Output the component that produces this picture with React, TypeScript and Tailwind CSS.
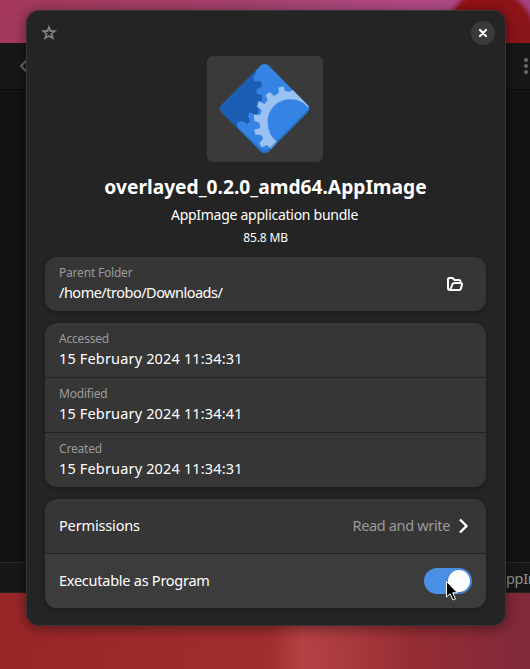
import type { ReactNode } from "react";

function AppImageIcon() {
  return (
    <svg viewBox="21 18 348 318" className="h-[106px] w-[116px]">
      <defs>
        <clipPath id="diamond">
          <path d="M183 46Q194 38 205 46L323 165Q331 176 323 187L205 305Q194 313 183 305L65 187Q56 176 65 165Z" />
        </clipPath>
      </defs>
      <g clipPath="url(#diamond)">
        <rect x="50" y="30" width="290" height="290" fill="#3584e4" />
        <path
          d="M40 20H168V69L159 81L164 94L182 93L187 108L169 119L171 133L187 136L185 153L171 155L176 174L174 194L161 193L149 187L144 199L151 213L141 223L128 213L112 217V240H40Z"
          fill="#1a5fb4"
        />
        <path
          d="M340 176V130L281 118L270 125L255 123L250 109L235 113L237 128L222 138L209 126L197 135L203 150L194 162L177 154L171 170L185 180L181 194H161L163 212L178 218L181 234L163 239L166 254L183 254L190 265L178 280L185 292L202 285L214 300L232 276Q203 255 203 216C203 178 233 148 271 148Q306 148 328 176Z"
          fill="#99c1f1"
        />
        <path
          d="M57 176L183 297Q194 304 205 297L331 171V190L205 315H183L57 194Z"
          fill="#1a5fb4"
          opacity=".5"
        />
      </g>
    </svg>
  );
}

function Group({ children, className = "" }: { children: ReactNode; className?: string }) {
  return (
    <div
      className={`w-[441px] divide-y divide-[#222] overflow-hidden rounded-xl bg-[#363636] shadow-[0_1px_4px_rgba(0,0,0,0.3)] ${className}`}
    >
      {children}
    </div>
  );
}

function Property({
  label,
  value,
  valueClass = "tracking-[0.16px]",
  children,
}: {
  label: string;
  value: string;
  valueClass?: string;
  children?: ReactNode;
}) {
  return (
    <div className="box-content flex h-[54px] items-center justify-between pr-[22px] pl-[14px]">
      <div>
        <div className="h-[18px] text-[12px] leading-[18px] tracking-[-0.2px] text-[#9b9b9b]">{label}</div>
        <div className={`h-[22px] text-[14.5px] leading-[20px] text-white ${valueClass}`}>{value}</div>
      </div>
      {children}
    </div>
  );
}

export default function App() {
  return (
    <div
      className="relative h-[669px] w-[530px] overflow-hidden bg-[linear-gradient(90deg,#982629_0%,#a02e30_51%,#b54145_57%,#a93a3e_66%,#962d34_78%,#80293a_100%)] text-white"
      style={{ fontFamily: '"Noto Sans", sans-serif' }}
    >
      <div className="relative h-[43px] overflow-hidden bg-[linear-gradient(90deg,#a4385a,#a6436f_48%,#b34c87_80%,#a34482)]">
        <div className="absolute -top-[11px] left-[440px] h-[130px] w-[100px] rounded-[50%] bg-[linear-gradient(120deg,#981010,#821923)] blur-[2px]" />
      </div>
      <div className="flex h-[550px] flex-col border-b border-[#242424] bg-[#131313] text-[#686868]">
        <div className="flex h-[47px] items-center justify-between border-b border-[#0a0a0a] bg-[#171717] pl-[18px]">
          <svg width="12" height="14" viewBox="0 0 12 14" fill="none" stroke="currentColor" strokeWidth="2">
            <path d="M9 1 3 7l6 6" />
          </svg>
          <svg width="7" height="18" viewBox="0 0 7 18" fill="currentColor">
            <circle cx="3" cy="3" r="2" />
            <circle cx="3" cy="9" r="2" />
            <circle cx="3" cy="15" r="2" />
          </svg>
        </div>
        <div className="flex-1" />
        <div className="h-[30px] border-t border-[#2b2b2b] bg-[#171717] pl-[506px] text-[14.5px] leading-[30px] tracking-[-0.3px] whitespace-nowrap text-[#919191]">
          ppIm
        </div>
      </div>

      <main className="absolute top-[10px] left-[26px] flex h-[616px] w-[480px] flex-col items-center rounded-[13px] border border-[#353535] bg-[#242424] pr-px shadow-[0_2px_12px_2px_rgba(0,0,0,0.35)]">
        <header className="flex h-[45px] w-full items-center justify-between pr-[9px] pb-[2px] pl-[13px]">
          <svg width="18" height="18" viewBox="0 0 18 18">
            <path
              d="M9 .8l2.1 5.3 6 .1-4.7 3.8 1.9 6L9 12.9 3.7 16l1.9-6L.9 6.2l6-.1zM9 5.4L8.2 8H5.3l2.3 1.7-.9 2.8L9 10.9l2.3 1.6-.9-2.8L12.700 8H9.8z"
              fill="#808080"
              fillRule="evenodd"
            />
          </svg>
          <button aria-label="Close" className="flex size-6 items-center justify-center rounded-full bg-[#3a3a3a]">
            <svg width="10" height="10" viewBox="0 0 10 10" stroke="white" strokeWidth="2.2" strokeLinecap="round">
              <path d="M2 2l6 6M8 2 2 8" />
            </svg>
          </button>
        </header>
        <div className="mr-px h-[106px] w-[116px] rounded-md bg-[#3a3a3a]">
          <AppImageIcon />
        </div>
        <h1 className="mt-[11px] h-[28px] text-[19.2px] leading-[28px] font-bold whitespace-nowrap">
          overlayed_0.2.0_amd64.AppImage
        </h1>
        <p className="mt-[3px] mr-[2px] h-[22px] text-[14px] leading-[22px] tracking-[-0.27px]">
          AppImage application bundle
        </p>
        <p className="mt-[2px] h-[20px] text-[12px] leading-[20px] tracking-[-0.15px]">85.8 MB</p>
        <Group className="mt-[9px]">
          <Property label="Parent Folder" value="/home/trobo/Downloads/" valueClass="tracking-[-0.5px]">
            <svg
              width="18"
              height="16"
              viewBox="0 0 18 16"
              fill="none"
              stroke="white"
              strokeWidth="2"
              strokeLinejoin="round"
              strokeLinecap="round"
            >
              <path d="M4 14h9.2c.8 0 1.3-.4 1.6-1.1l1.1-4c.3-1-.2-1.9-1.2-1.9H8.2c-.8 0-1.4.4-1.7 1.1L4.6 13M4 14c-1.2 0-2-.8-2-2V3.5C2 2.6 2.6 2 3.5 2h3l2 2H13c.8 0 1.3.5 1.5 1.2V7" />
            </svg>
          </Property>
        </Group>
        <Group className="mt-3">
          <Property label="Accessed" value="15 February 2024 11:34:31" />
          <Property label="Modified" value="15 February 2024 11:34:41" />
          <Property label="Created" value="15 February 2024 11:34:31" />
        </Group>
        <Group className="mt-3">
          <div className="box-content flex h-[54px] items-center pr-[16px] pl-[14px] text-[14.5px]">
            <span className="tracking-[-0.15px]">Permissions</span>
            <span className="ml-auto tracking-[-0.35px] text-[#9b9b9b]">Read and write</span>
            <svg className="ml-[8px]" width="12" height="16" viewBox="0 0 12 16" fill="none" stroke="white" strokeWidth="2.4">
              <path d="M2 1.5 8.5 8 2 14.5" />
            </svg>
          </div>
          <div className="box-content flex h-[54px] items-center justify-between bg-[#3c3c3c] pr-[14px] pl-[14px] text-[14.5px]">
            <span className="tracking-[-0.25px]">Executable as Program</span>
            <span role="switch" aria-checked="true" className="flex h-[26px] w-12 justify-end rounded-full bg-[#4a90e4] p-[2px]">
              <span className="size-[22px] rounded-full bg-white shadow-[0_1px_3px_rgba(0,0,0,0.3)]" />
            </span>
          </div>
        </Group>
      </main>

      <svg className="absolute top-[580px] left-[445px]" width="14" height="22" viewBox="0 0 14 22">
        <path
          d="M1.5 1.5V17l3.6-3.2 3 6.2 2.4-1.2-2.8-6h4.7z"
          fill="black"
          stroke="white"
          strokeWidth="1"
          strokeLinejoin="round"
        />
      </svg>
    </div>
  );
}
